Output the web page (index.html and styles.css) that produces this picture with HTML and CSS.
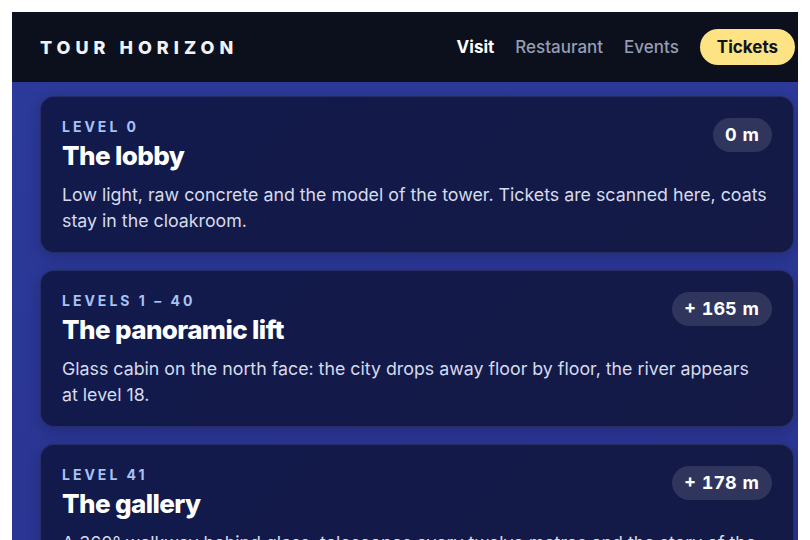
FILE: index.html
```html
<!DOCTYPE html>
<html lang="en">
<head>
    <meta charset="UTF-8">
    <meta name="viewport" content="width=device-width, initial-scale=1.0">
    <title>Tour Horizon - Visit</title>
    <link rel="stylesheet" href="styles.css">
</head>
<body>
    <div class="page">
        <header class="topbar">
            <div class="brand">TOUR HORIZON</div>
            <nav class="nav">
                <a href="#" class="nav-link active">Visit</a>
                <a href="#" class="nav-link">Restaurant</a>
                <a href="#" class="nav-link">Events</a>
                <a href="#" class="nav-cta">Tickets</a>
            </nav>
        </header>

        <main class="floors">
            <!-- Floor cards -->
            <section class="floor-card">
                <div class="floor-head">
                    <div>
                        <p class="floor-level">Level 0</p>
                        <h2 class="floor-title">The lobby</h2>
                    </div>
                    <span class="floor-height">0 m</span>
                </div>
                <p class="floor-text">Low light, raw concrete and the model of the tower. Tickets are scanned here, coats stay in the cloakroom.</p>
            </section>

            <section class="floor-card">
                <div class="floor-head">
                    <div>
                        <p class="floor-level">Levels 1 – 40</p>
                        <h2 class="floor-title">The panoramic lift</h2>
                    </div>
                    <span class="floor-height">+ 165 m</span>
                </div>
                <p class="floor-text">Glass cabin on the north face: the city drops away floor by floor, the river appears at&nbsp;level 18.</p>
            </section>

            <section class="floor-card">
                <div class="floor-head">
                    <div>
                        <p class="floor-level">Level 41</p>
                        <h2 class="floor-title">The gallery</h2>
                    </div>
                    <span class="floor-height">+ 178 m</span>
                </div>
                <p class="floor-text">A 360° walkway behind glass, telescopes every twelve metres and the story of the skyline told panel by panel.</p>
            </section>
        </main>
    </div>
</body>
</html>
```

FILE: styles.css
```css
* {
    margin: 0;
    padding: 0;
    box-sizing: border-box;
}

body {
    margin: 12px;
    font-family: Inter, 'Noto Sans', sans-serif;
    background: #ffffff;
}

.page {
    width: 810px;
    min-height: 600px;
    background: linear-gradient(180deg, #2c3a9a 0%, #2b3592 100%);
}

.topbar {
    height: 70px;
    background: #0c101d;
    display: flex;
    align-items: center;
    justify-content: space-between;
    padding: 0 27px 0 28px;
}

.brand {
    color: #f1f3fa;
    font-size: 18px;
    font-weight: 800;
    letter-spacing: 5px;
}

.nav {
    display: flex;
    align-items: center;
    gap: 21px;
}

.nav-link {
    color: #949db3;
    text-decoration: none;
    font-size: 17px;
    font-weight: 500;
}

.nav-link.active {
    color: #ffffff;
    font-weight: 700;
}

.nav-cta {
    background: #fde384;
    color: #111522;
    text-decoration: none;
    font-size: 17px;
    font-weight: 700;
    padding: 8px 17px;
    border-radius: 19px;
}

.floors {
    padding: 14px 28px;
    display: flex;
    flex-direction: column;
    gap: 17px;
}

.floor-card {
    background: linear-gradient(135deg, #121a4d 0%, #141a45 100%);
    border: 1px solid rgba(120, 140, 230, 0.18);
    border-radius: 14px;
    padding: 20px 21px 18px 21px;
    box-shadow: 0 4px 14px rgba(8, 12, 40, 0.25);
}

.floor-head {
    display: flex;
    justify-content: space-between;
    align-items: flex-start;
}

.floor-level {
    color: #a9c2f2;
    font-size: 14px;
    font-weight: 700;
    letter-spacing: 3px;
    text-transform: uppercase;
    line-height: 20px;
}

.floor-title {
    margin-top: 2px;
    color: #ffffff;
    font-size: 26px;
    font-weight: 800;
    letter-spacing: -0.6px;
    line-height: 34px;
}

.floor-height {
    margin-top: 1px;
    background: rgba(255, 255, 255, 0.12);
    color: #ffffff;
    font-size: 18px;
    font-weight: 700;
    font-variant-numeric: tabular-nums;
    word-spacing: 1px;
    line-height: 20px;
    padding: 7px 13px 7px 12px;
    border-radius: 18px;
    white-space: nowrap;
}

.floor-text {
    margin-top: 9px;
    color: #d6dbec;
    font-size: 17.8px;
    line-height: 26px;
}
```
